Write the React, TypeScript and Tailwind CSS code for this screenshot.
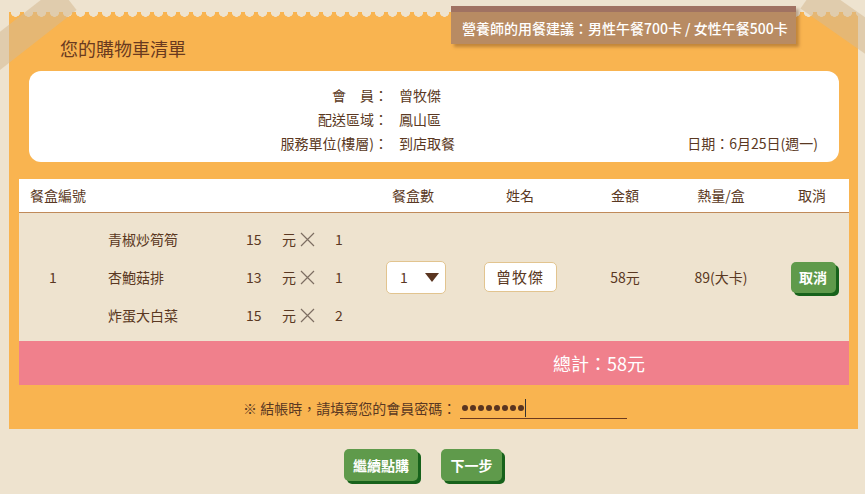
import React from "react";

const items: [string, string, string][] = [
  ["青椒炒筍筍", "15", "1"],
  ["杏鮑菇排", "13", "1"],
  ["炸蛋大白菜", "15", "2"],
];

function Times() {
  return (
    <svg width="15" height="15" viewBox="0 0 15 15" className="block">
      <path d="M1 1 L14 14 M14 1 L1 14" stroke="#7d6e62" strokeWidth="1.2" fill="none" />
    </svg>
  );
}

function GreenButton({ label, className = "" }: { label: string; className?: string }) {
  return (
    <button
      className={`flex items-center justify-center rounded-[5px] bg-[#5f9a4b] font-bold text-white shadow-[3px_3px_0_#17621b] ${className}`}
    >
      {label}
    </button>
  );
}

export default function App() {
  return (
    <div className="relative h-[494px] w-[865px] overflow-hidden bg-[#eee3cf] font-['Noto_Sans_CJK_TC','Noto_Sans',sans-serif] text-[14px] text-[#5a3822]">
      <div className="ml-[9px] mt-[12px] w-[849px] bg-[#f9b450]">
        <div className="h-[5px] bg-[radial-gradient(circle_at_6.5px_0,#eee3cf_4.5px,transparent_5px)] bg-[length:13px_6px] bg-repeat-x" />
        <div className="h-[54px] pl-[51px] pt-[19px] text-[18px] leading-[24px] text-[#6a3a1f]">您的購物車清單</div>

        <div className="ml-[20px] mr-[19px] h-[91px] rounded-[12px] bg-white pt-[12px]">
          {[
            ["會　員：", "曾牧傑"],
            ["配送區域：", "鳳山區"],
            ["服務單位(樓層)：", "到店取餐"],
          ].map(([label, value], i) => (
            <div key={label} className="flex h-[24px] items-center leading-[24px]">
              <div className="w-[359px] text-right">{label}</div>
              <div className="ml-[11px] flex-1">{value}</div>
              {i === 2 && <div className="pr-[21px]">日期：6月25日(週一)</div>}
            </div>
          ))}
        </div>

        <div className="ml-[10px] mr-[9px] mt-[17px]">
          <div className="grid h-[34px] grid-cols-[350px_88px_126px_84px_108px_74px] items-center border-b border-[#c08a5a] bg-white">
            <div className="pl-[11px]">餐盒編號</div>
            <div className="text-center">餐盒數</div>
            <div className="text-center">姓名</div>
            <div className="text-center">金額</div>
            <div className="text-center">熱量/盒</div>
            <div className="text-center">取消</div>
          </div>

          <div className="grid h-[128px] grid-cols-[350px_88px_126px_84px_108px_74px] items-center bg-[#eee3cf]">
            <div className="flex items-center">
              <div className="w-[68px] text-center">1</div>
              <div className="pl-[21px] pt-[1px]">
                {items.map(([name, price, qty]) => (
                  <div key={name} className="flex h-[38px] items-center">
                    <div className="w-[138px]">{name}</div>
                    <div className="w-[36px]">{price}</div>
                    <div className="w-[18px]">元</div>
                    <Times />
                    <div className="ml-[20px]">{qty}</div>
                  </div>
                ))}
              </div>
            </div>
            <div className="flex justify-center pl-[6px]">
              <div className="flex h-[33px] w-[60px] items-center justify-between rounded-[5px] border border-[#e2c48f] bg-white pl-[13px] pr-[6px]">
                <span>1</span>
                <svg width="14" height="9" viewBox="0 0 14 9">
                  <path d="M0 0 H14 L7 9 Z" fill="#5a3520" />
                </svg>
              </div>
            </div>
            <div className="flex justify-center">
              <div className="flex h-[30px] w-[73px] items-center justify-center rounded-[5px] border border-[#e2c48f] bg-white text-[15px] tracking-[1px]">
                曾牧傑
              </div>
            </div>
            <div className="text-center">58元</div>
            <div className="text-center">89(大卡)</div>
            <div className="flex justify-center pl-[2px]">
              <GreenButton label="取消" className="h-[31px] w-[45px] text-[14px]" />
            </div>
          </div>

          <div className="flex h-[44px] items-center bg-[#f0808c] pl-[534px] text-[18px] text-white">總計：58元</div>
        </div>

        <div className="flex h-[44px] items-center pl-[234px] pt-[2px]">
          <span>※ 結帳時，請填寫您的會員密碼：</span>
          <div className="ml-[4px] flex h-[22px] w-[167px] items-center border-b border-[#6b3a1f] pl-[2px]">
            <div className="flex gap-[2px]">
              {Array.from({ length: 8 }).map((_, i) => (
                <span key={i} className="h-[6px] w-[6px] rounded-full bg-[#5a3520]" />
              ))}
            </div>
            <span className="ml-[1px] h-[18px] w-[1px] bg-[#333]" />
          </div>
        </div>
      </div>

      <div className="flex gap-[23px] pl-[344px] pt-[20px]">
        <GreenButton label="繼續點購" className="h-[32px] w-[74px] text-[14px]" />
        <GreenButton label="下一步" className="h-[32px] w-[61px] text-[14px]" />
      </div>

      {/* 營養師建議 tag */}
      <div className="absolute left-[451px] top-[6px] w-[345px] shadow-[3px_3px_3px_rgba(90,50,20,0.35)]">
        <div className="h-[6px] bg-[#a07262]" />
        <div className="flex h-[32px] items-center bg-[#b88b63] pl-[11px] text-[14px] font-medium text-white">
          營養師的用餐建議：男性午餐700卡 / 女性午餐500卡
        </div>
      </div>

      {/* masking tape corners */}
      <div className="absolute left-[-22px] top-[14px] h-[30px] w-[100px] -rotate-[38deg] bg-[rgba(214,186,146,0.55)]" />
      <div className="absolute left-[800px] top-[10px] h-[30px] w-[100px] rotate-[35deg] bg-[rgba(214,186,146,0.55)]" />
    </div>
  );
}
